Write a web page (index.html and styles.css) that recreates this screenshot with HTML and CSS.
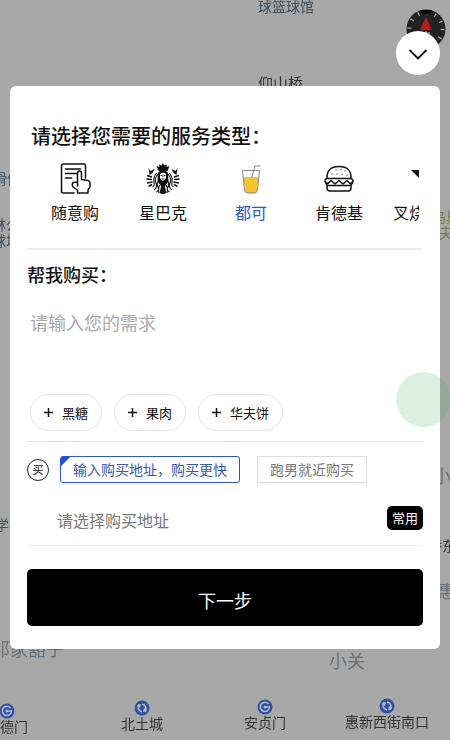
FILE: index.html
```html
<!DOCTYPE html>
<html lang="zh-CN">
<head>
    <meta charset="UTF-8">
    <meta name="viewport" content="width=device-width, initial-scale=1.0">
    <title>帮我购买</title>
    <link rel="stylesheet" href="styles.css">
</head>
<body>
    <!-- map -->
    <div class="map">
        <span class="place blue" style="left: 258px; top: -4px">球篮球馆</span>
        <span class="place name" style="left: 258px; top: 73px">仰山桥</span>
        <span class="place blue" style="left: -7px; top: 168px">滑体</span>
        <span class="place blue lines" style="left: -8px; top: 216px">林公<br>球场</span>
        <span class="place green lines" style="left: 432px; top: 208px">鸟巢<br>夫</span>
        <span class="place big" style="left: 433px; top: 463px">小</span>
        <span class="place blue" style="left: -5px; top: 514px">学</span>
        <span class="place" style="left: 428px; top: 535px">桥东</span>
        <span class="place big" style="left: 438px; top: 578px">惠</span>
        <span class="place big" style="left: -8px; top: 636px">祁家豁子</span>
        <span class="place big" style="left: 329px; top: 648px">小关</span>

        <div class="station" style="left: 7px; top: 703px">
            <svg width="16" height="16" viewBox="0 0 16 16"><circle cx="8" cy="8" r="7.5" fill="#3450a0"/><path d="M11.5 5A4.6 4.6 0 1 0 12.500 8H8" fill="none" stroke="#b5bdd0" stroke-width="1.500"/><circle cx="8" cy="8" r="1.500" fill="#b5bdd0"/></svg>
            <span>健德门</span>
        </div>
        <div class="station" style="left: 142px; top: 700px">
            <svg width="16" height="16" viewBox="0 0 16 16"><circle cx="8" cy="8" r="7.5" fill="#3450a0"/><path d="M5 4.500C3 7 4 11 8 12M11 11.500C13 9 12 5 8 4" fill="none" stroke="#b5bdd0" stroke-width="1.600"/><path d="M3 5l4-1-1 4zM13 11l-4 1 1-4z" fill="#b5bdd0"/></svg>
            <span>北土城</span>
        </div>
        <div class="station" style="left: 265px; top: 699px">
            <svg width="16" height="16" viewBox="0 0 16 16"><circle cx="8" cy="8" r="7.5" fill="#3450a0"/><path d="M11.5 5A4.6 4.6 0 1 0 12.500 8H8" fill="none" stroke="#b5bdd0" stroke-width="1.500"/><circle cx="8" cy="8" r="1.500" fill="#b5bdd0"/></svg>
            <span>安贞门</span>
        </div>
        <div class="station" style="left: 387px; top: 698px">
            <svg width="16" height="16" viewBox="0 0 16 16"><circle cx="8" cy="8" r="7.5" fill="#3450a0"/><path d="M5 4.500C3 7 4 11 8 12M11 11.500C13 9 12 5 8 4" fill="none" stroke="#b5bdd0" stroke-width="1.600"/><path d="M3 5l4-1-1 4zM13 11l-4 1 1-4z" fill="#b5bdd0"/></svg>
            <span>惠新西街南口</span>
        </div>

        <svg class="compass" width="40" height="40" viewBox="0 0 40 40">
            <circle cx="20" cy="20" r="19.5" fill="#222"/>
            <circle cx="20" cy="20" r="16.5" fill="none" stroke="#aaa" stroke-width="4" stroke-dasharray="1.2 7.439"/>
            <path d="M14 1h12l-2 4h-8z" fill="#050505"/>
            <path d="M20 8l6 13H14z" fill="#b81d18"/>
            <path d="M16 24h8M20 22v5" stroke="#ccc"/>
        </svg>
    </div>

    <div class="overlay">
        <button class="close" type="button" aria-label="收起">
            <svg width="20" height="20" viewBox="0 0 20 20"><path d="M1.500 7L10 15.500 18.500 7" fill="none" stroke="#111" stroke-width="1.800"/></svg>
        </button>

        <main class="sheet">
            <h1 class="title">请选择您需要的服务类型：</h1>
            <div class="types">
                <div class="services">
                    <button class="service" type="button">
                        <svg width="36" height="36" viewBox="0 0 36 36" fill="none" stroke="#111" stroke-width="1.500" stroke-linejoin="round" stroke-linecap="round">
                            <path d="M17 32H6.500Q4.500 32 4.500 30V5Q4.500 3 6.500 3H27Q28.500 3 28.500 5V17"/>
                            <path d="M8.500 8h15M8.500 12.500h11M8.500 17h6"/>
                            <path d="M20.500 25V12.500Q20.500 10 22.500 10T24.500 12.500V18.500L31 19.500Q33 20 33 22V26L31 29V32H20.500V29L16 26Q14.500 24 16 21.500L20.500 21"/>
                        </svg>
                        <span>随意购</span>
                    </button>
                    <button class="service" type="button">
                        <svg width="36" height="36" viewBox="0 0 36 36" fill="none" stroke="#111">
                            <path d="M18 2l1.500 2.500L22 3.500l-.5 2.500 3-1-2 5h-9l-2-5 3 1-.5-2.500 2.500 1z" fill="#111" stroke="none"/>
                            <path d="M13 13Q13 9.500 18 9.500T23 13L23.500 20 21 24H15L12.500 20z" fill="#111" stroke="none"/>
                            <path d="M15 13Q18 10.500 21 13V17Q18 22.500 15 17z" fill="#fff" stroke="none"/>
                            <path d="M15.500 14.500h2M18.500 14.500h2M18 14.500v2M16.500 18h3" stroke-width=".8"/>
                            <path d="M15 22Q18 20 21 22L20 26 21.500 32Q18 34 14.500 32L16 26z" fill="#111" stroke="none"/>
                            <path d="M13 13Q9 18 11 22T9 29M14 19Q11 23 13 26T11.500 31M15 24Q12.500 28 14 32M11.500 12Q8 17 9 21T7.500 26" stroke-width="1.100"/>
                            <path d="M23 13Q27 18 25 22T27 29M22 19Q25 23 23 26T24.500 31M21 24Q23.500 28 22 32M24.500 12Q28 17 27 21T28.500 26" stroke-width="1.100"/>
                            <path d="M3.500 7l2 3 4-2-2 4-3 2zM32.500 7l-2 3-4-2 2 4 3 2z" fill="#111" stroke="none"/>
                            <path d="M2 14.500l5 1.500M1.500 18l5.500.5M2 22l5.500-1M3.500 25.500L7 23.500M34 14.500l-5 1.500M34.500 18l-5.500.5M34 22l-5.500-1M32.500 25.500L29 23.500" stroke-width="1.500"/>
                        </svg>
                        <span>星巴克</span>
                    </button>
                    <button class="service active" type="button">
                        <svg width="36" height="36" viewBox="0 0 36 36" fill="none" stroke="#888">
                            <path d="M10.500 16h15L24 29Q23.500 32 21 32H15Q12.500 32 12 29z" fill="#f4c430" stroke="none"/>
                            <path d="M9.500 9.500h17L24.500 29Q24 32 21 32H15Q12 32 11.500 29z"/>
                            <path d="M18.500 17l3.500-12h5.500"/>
                        </svg>
                        <span>都可</span>
                    </button>
                    <button class="service" type="button">
                        <svg width="36" height="36" viewBox="0 0 36 36" fill="none" stroke="#111" stroke-width="1.500" stroke-linejoin="round" stroke-linecap="round">
                            <path d="M6 17.500Q5.500 5.500 18 5.500T30 17.500z"/>
                            <path d="M15 9h.1M20 8.500h.1M24 10h.1M11 13h.1M16 13h.1M21 13h.1M26 14h.1" stroke-width="1.200"/>
                            <path d="M6 17.500Q3.500 18 4 20T7 22.500L10 19.500 14 23 18 19.500 22 23 26 19.500 29 22.500Q32 22 32 20T30 17.500"/>
                            <path d="M4.500 21Q5 24.500 7.500 24.500H28.500Q31 24.500 31.500 21M6 24.500V27Q6 30 9 30H27Q30 30 30 27V24.500"/>
                        </svg>
                        <span>肯德基</span>
                    </button>
                    <button class="service last" type="button">
                        <svg width="36" height="36" viewBox="0 0 36 36"><path d="M4 9h28L18 23z" fill="#111"/></svg>
                        <span>叉烧</span>
                    </button>
                </div>
            </div>

            <label class="subtitle" for="need">帮我购买：</label>
            <textarea class="need" id="need" placeholder="请输入您的需求"></textarea>
            <div class="chips">
                <button class="chip" type="button"><svg width="9" height="9" viewBox="0 0 9 9"><path d="M0 4.500h9M4.500 0v9" stroke="#111" stroke-width="1.500"/></svg>黑糖</button>
                <button class="chip" type="button"><svg width="9" height="9" viewBox="0 0 9 9"><path d="M0 4.500h9M4.500 0v9" stroke="#111" stroke-width="1.500"/></svg>果肉</button>
                <button class="chip" type="button"><svg width="9" height="9" viewBox="0 0 9 9"><path d="M0 4.500h9M4.500 0v9" stroke="#111" stroke-width="1.500"/></svg>华夫饼</button>
            </div>

            <div class="modes">
                <label class="buy" for="address">买</label>
                <button class="mode selected" type="button">输入购买地址，购买更快</button>
                <button class="mode" type="button">跑男就近购买</button>
            </div>
            <div class="address">
                <input id="address" type="text" placeholder="请选择购买地址">
                <button class="common" type="button">常用</button>
            </div>
            <button class="next" type="button">下一步</button>
        </main>
    </div>

    <div class="touch"></div>
</body>
</html>
```
FILE: styles.css
```css
* {
    box-sizing: border-box;
}
body {
    margin: 0;
    background-color: #a8a8a8;
    color: #111;
}
body, button, input, textarea {
    font-family: "Noto Sans CJK SC", sans-serif;
}
button {
    padding: 0;
    border: none;
    background: none;
    color: inherit;
    cursor: pointer;
}
svg {
    display: block;
    flex-shrink: 0;
}

/* map */
.map {
    position: fixed;
    inset: 0;
    overflow: hidden;
}
.place {
    position: absolute;
    font-size: 14px;
    line-height: 20px;
    color: #333;
    white-space: nowrap;
}
.place.name {
    font-size: 15px;
}
.place.lines {
    line-height: 16px;
    text-align: center;
}
.place.blue {
    color: #3d5062;
}
.place.green {
    color: #638043;
}
.place.big {
    font-size: 18px;
    line-height: 24px;
    color: #65717a;
}
.station {
    position: absolute;
    display: flex;
    flex-direction: column;
    align-items: center;
    transform: translateX(-50%);
    font-size: 14px;
    line-height: 14px;
    color: #333;
    white-space: nowrap;
}
.compass {
    position: absolute;
    top: 9px;
    right: 4px;
}

/* sheet */
.overlay {
    position: relative;
    display: flex;
    flex-direction: column;
    gap: 11px;
    padding: 31px 10px 0;
}
.close {
    display: flex;
    align-items: center;
    justify-content: center;
    align-self: flex-end;
    width: 44px;
    height: 44px;
    border-radius: 50%;
    background-color: #fff;
}
.sheet {
    display: flex;
    flex-direction: column;
    padding: 36px 17px 23px;
    border-radius: 6px;
    background-color: #fff;
}
.title {
    margin: 0 0 11px 4px;
    font-size: 20px;
    font-weight: 500;
    line-height: 28px;
}
.types {
    padding: 0 4px 24px;
    border-bottom: 2px solid #ececec;
}
.services {
    display: flex;
    overflow: hidden;
}
.service {
    display: flex;
    flex: 0 0 88px;
    flex-direction: column;
    align-items: center;
    gap: 3px;
    font-size: 16px;
    line-height: 24px;
}
.service.active {
    color: #2c56c8;
}
.service.last {
    align-items: flex-start;
    padding-left: 10px;
}
.service.last svg {
    margin-left: 14px;
}
.subtitle {
    margin-top: 10px;
    font-size: 18px;
    font-weight: 500;
    line-height: 28px;
}
.need {
    height: 76px;
    margin: 20px 0 10px;
    padding: 0 3px;
    border: none;
    outline: none;
    resize: none;
    font-size: 18px;
    line-height: 28px;
}
.need::placeholder {
    color: #aaa;
}
.chips {
    display: flex;
    gap: 12px;
    padding: 0 3px 10px;
    border-bottom: 1px solid #ddd;
}
.chip {
    display: flex;
    align-items: center;
    gap: 9px;
    height: 37px;
    padding: 0 13px;
    border: 1px solid #e2e2e2;
    border-radius: 19px;
    font-size: 13px;
}
.modes {
    display: flex;
    align-items: center;
    margin-top: 14px;
}
.buy {
    width: 22px;
    height: 22px;
    margin-right: 11px;
    border: 1px solid #222;
    border-radius: 50%;
    font-size: 11px;
    line-height: 19px;
    text-align: center;
}
.mode {
    height: 27px;
    padding: 0 12px 2px;
    border: 1px solid #ddd;
    font-size: 14px;
    line-height: 20px;
    color: #777;
}
.mode.selected {
    margin-right: 17px;
    border-color: #3155c4;
    border-radius: 3px;
    background: linear-gradient(135deg, #1f4fe0 6px, transparent 7px);
    color: #3a57ad;
}
.address {
    display: flex;
    align-items: center;
    margin-top: 23px;
    padding: 0 0 15px 30px;
    border-bottom: 1px solid #f0f0f0;
}
.address input {
    flex: 1;
    min-width: 0;
    height: 24px;
    padding: 4px 0 0;
    border: none;
    outline: none;
    font-size: 16px;
}
.address input::placeholder {
    color: #777;
}
.common {
    width: 36px;
    height: 24px;
    padding-bottom: 2px;
    border-radius: 5px;
    background-color: #000;
    color: #fff;
    font-size: 13px;
}
.next {
    height: 57px;
    margin-top: 23px;
    padding-top: 4px;
    border-radius: 5px;
    background-color: #000;
    color: #fff;
    font-size: 18px;
}

/* floating touch point */
.touch {
    position: fixed;
    top: 372px;
    right: -1px;
    width: 55px;
    height: 55px;
    border-radius: 50%;
    background-color: rgba(65, 180, 110, 0.2);
}
```
